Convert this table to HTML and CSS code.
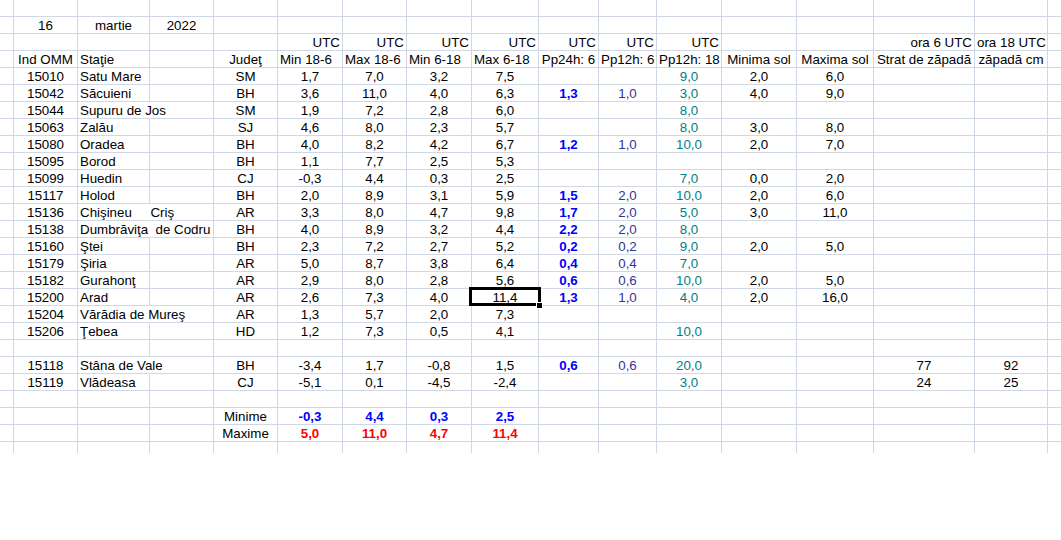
FILE: index.html
```html
<!DOCTYPE html>
<html lang="ro">
<head>
<meta charset="utf-8">
<title>Temperaturi 16 martie 2022</title>
<link rel="stylesheet" href="styles.css">
</head>
<body>
<div class="sheet">
  <div class="r"><div class="c"></div><div class="c"></div><div class="c"></div><div class="c"></div><div class="c"></div><div class="c"></div><div class="c"></div><div class="c"></div><div class="c"></div><div class="c"></div><div class="c"></div><div class="c"></div><div class="c"></div><div class="c"></div><div class="c"></div><div class="c"></div><div class="c"></div></div>
  <div class="r"><div class="c"></div><div class="c">16</div><div class="c">martie</div><div class="c">2022</div><div class="c"></div><div class="c"></div><div class="c"></div><div class="c"></div><div class="c"></div><div class="c"></div><div class="c"></div><div class="c"></div><div class="c"></div><div class="c"></div><div class="c"></div><div class="c"></div><div class="c"></div></div>
  <div class="r"><div class="c"></div><div class="c"></div><div class="c"></div><div class="c"></div><div class="c"></div><div class="c rt">UTC</div><div class="c rt">UTC</div><div class="c rt">UTC</div><div class="c rt">UTC</div><div class="c rt">UTC</div><div class="c rt">UTC</div><div class="c rt">UTC</div><div class="c"></div><div class="c"></div><div class="c rt">ora 6 UTC</div><div class="c rt">ora 18 UTC</div><div class="c"></div></div>
  <div class="r"><div class="c"></div><div class="c">Ind OMM</div><div class="c l">Staţie</div><div class="c"></div><div class="c">Judeţ</div><div class="c l">Min 18-6</div><div class="c l">Max 18-6</div><div class="c l">Min 6-18</div><div class="c l">Max 6-18</div><div class="c">Pp24h: 6</div><div class="c">Pp12h: 6</div><div class="c">Pp12h: 18</div><div class="c">Minima sol</div><div class="c">Maxima sol</div><div class="c">Strat de zăpadă</div><div class="c">zăpadă cm</div><div class="c"></div></div>

  <div class="r"><div class="c"></div><div class="c">15010</div><div class="c l">Satu Mare</div><div class="c"></div><div class="c">SM</div><div class="c">1,7</div><div class="c">7,0</div><div class="c">3,2</div><div class="c">7,5</div><div class="c b"></div><div class="c p"></div><div class="c t">9,0</div><div class="c">2,0</div><div class="c">6,0</div><div class="c"></div><div class="c"></div><div class="c"></div></div>
  <div class="r"><div class="c"></div><div class="c">15042</div><div class="c l">Săcuieni</div><div class="c"></div><div class="c">BH</div><div class="c">3,6</div><div class="c">11,0</div><div class="c">4,0</div><div class="c">6,3</div><div class="c b">1,3</div><div class="c p">1,0</div><div class="c t">3,0</div><div class="c">4,0</div><div class="c">9,0</div><div class="c"></div><div class="c"></div><div class="c"></div></div>
  <div class="r"><div class="c"></div><div class="c">15044</div><div class="c l ov">Supuru de Jos</div><div class="c"></div><div class="c">SM</div><div class="c">1,9</div><div class="c">7,2</div><div class="c">2,8</div><div class="c">6,0</div><div class="c b"></div><div class="c p"></div><div class="c t">8,0</div><div class="c"></div><div class="c"></div><div class="c"></div><div class="c"></div><div class="c"></div></div>
  <div class="r"><div class="c"></div><div class="c">15063</div><div class="c l">Zalău</div><div class="c"></div><div class="c">SJ</div><div class="c">4,6</div><div class="c">8,0</div><div class="c">2,3</div><div class="c">5,7</div><div class="c b"></div><div class="c p"></div><div class="c t">8,0</div><div class="c">3,0</div><div class="c">8,0</div><div class="c"></div><div class="c"></div><div class="c"></div></div>
  <div class="r"><div class="c"></div><div class="c">15080</div><div class="c l">Oradea</div><div class="c"></div><div class="c">BH</div><div class="c">4,0</div><div class="c">8,2</div><div class="c">4,2</div><div class="c">6,7</div><div class="c b">1,2</div><div class="c p">1,0</div><div class="c t">10,0</div><div class="c">2,0</div><div class="c">7,0</div><div class="c"></div><div class="c"></div><div class="c"></div></div>
  <div class="r"><div class="c"></div><div class="c">15095</div><div class="c l">Borod</div><div class="c"></div><div class="c">BH</div><div class="c">1,1</div><div class="c">7,7</div><div class="c">2,5</div><div class="c">5,3</div><div class="c b"></div><div class="c p"></div><div class="c t"></div><div class="c"></div><div class="c"></div><div class="c"></div><div class="c"></div><div class="c"></div></div>
  <div class="r"><div class="c"></div><div class="c">15099</div><div class="c l">Huedin</div><div class="c"></div><div class="c">CJ</div><div class="c">-0,3</div><div class="c">4,4</div><div class="c">0,3</div><div class="c">2,5</div><div class="c b"></div><div class="c p"></div><div class="c t">7,0</div><div class="c">0,0</div><div class="c">2,0</div><div class="c"></div><div class="c"></div><div class="c"></div></div>
  <div class="r"><div class="c"></div><div class="c">15117</div><div class="c l">Holod</div><div class="c"></div><div class="c">BH</div><div class="c">2,0</div><div class="c">8,9</div><div class="c">3,1</div><div class="c">5,9</div><div class="c b">1,5</div><div class="c p">2,0</div><div class="c t">10,0</div><div class="c">2,0</div><div class="c">6,0</div><div class="c"></div><div class="c"></div><div class="c"></div></div>
  <div class="r"><div class="c"></div><div class="c">15136</div><div class="c l ov">Chişineu     Criş</div><div class="c"></div><div class="c">AR</div><div class="c">3,3</div><div class="c">8,0</div><div class="c">4,7</div><div class="c">9,8</div><div class="c b">1,7</div><div class="c p">2,0</div><div class="c t">5,0</div><div class="c">3,0</div><div class="c">11,0</div><div class="c"></div><div class="c"></div><div class="c"></div></div>
  <div class="r"><div class="c"></div><div class="c">15138</div><div class="c l ov">Dumbrăviţa  de Codru</div><div class="c"></div><div class="c">BH</div><div class="c">4,0</div><div class="c">8,9</div><div class="c">3,2</div><div class="c">4,4</div><div class="c b">2,2</div><div class="c p">2,0</div><div class="c t">8,0</div><div class="c"></div><div class="c"></div><div class="c"></div><div class="c"></div><div class="c"></div></div>
  <div class="r"><div class="c"></div><div class="c">15160</div><div class="c l">Ştei</div><div class="c"></div><div class="c">BH</div><div class="c">2,3</div><div class="c">7,2</div><div class="c">2,7</div><div class="c">5,2</div><div class="c b">0,2</div><div class="c p">0,2</div><div class="c t">9,0</div><div class="c">2,0</div><div class="c">5,0</div><div class="c"></div><div class="c"></div><div class="c"></div></div>
  <div class="r"><div class="c"></div><div class="c">15179</div><div class="c l">Şiria</div><div class="c"></div><div class="c">AR</div><div class="c">5,0</div><div class="c">8,7</div><div class="c">3,8</div><div class="c">6,4</div><div class="c b">0,4</div><div class="c p">0,4</div><div class="c t">7,0</div><div class="c"></div><div class="c"></div><div class="c"></div><div class="c"></div><div class="c"></div></div>
  <div class="r"><div class="c"></div><div class="c">15182</div><div class="c l">Gurahonţ</div><div class="c"></div><div class="c">AR</div><div class="c">2,9</div><div class="c">8,0</div><div class="c">2,8</div><div class="c">5,6</div><div class="c b">0,6</div><div class="c p">0,6</div><div class="c t">10,0</div><div class="c">2,0</div><div class="c">5,0</div><div class="c"></div><div class="c"></div><div class="c"></div></div>
  <div class="r"><div class="c"></div><div class="c">15200</div><div class="c l">Arad</div><div class="c"></div><div class="c">AR</div><div class="c">2,6</div><div class="c">7,3</div><div class="c">4,0</div><div class="c sel">11,4</div><div class="c b">1,3</div><div class="c p">1,0</div><div class="c t">4,0</div><div class="c">2,0</div><div class="c">16,0</div><div class="c"></div><div class="c"></div><div class="c"></div></div>
  <div class="r"><div class="c"></div><div class="c">15204</div><div class="c l ov">Vărădia de Mureş</div><div class="c"></div><div class="c">AR</div><div class="c">1,3</div><div class="c">5,7</div><div class="c">2,0</div><div class="c">7,3</div><div class="c b"></div><div class="c p"></div><div class="c t"></div><div class="c"></div><div class="c"></div><div class="c"></div><div class="c"></div><div class="c"></div></div>
  <div class="r"><div class="c"></div><div class="c">15206</div><div class="c l">Ţebea</div><div class="c"></div><div class="c">HD</div><div class="c">1,2</div><div class="c">7,3</div><div class="c">0,5</div><div class="c">4,1</div><div class="c b"></div><div class="c p"></div><div class="c t">10,0</div><div class="c"></div><div class="c"></div><div class="c"></div><div class="c"></div><div class="c"></div></div>

  <div class="r"><div class="c"></div><div class="c"></div><div class="c"></div><div class="c"></div><div class="c"></div><div class="c"></div><div class="c"></div><div class="c"></div><div class="c"></div><div class="c"></div><div class="c"></div><div class="c"></div><div class="c"></div><div class="c"></div><div class="c"></div><div class="c"></div><div class="c"></div></div>
  <div class="r"><div class="c"></div><div class="c">15118</div><div class="c l ov">Stâna de Vale</div><div class="c"></div><div class="c">BH</div><div class="c">-3,4</div><div class="c">1,7</div><div class="c">-0,8</div><div class="c">1,5</div><div class="c b">0,6</div><div class="c p">0,6</div><div class="c t">20,0</div><div class="c"></div><div class="c"></div><div class="c">77</div><div class="c">92</div><div class="c"></div></div>
  <div class="r"><div class="c"></div><div class="c">15119</div><div class="c l">Vlădeasa</div><div class="c"></div><div class="c">CJ</div><div class="c">-5,1</div><div class="c">0,1</div><div class="c">-4,5</div><div class="c">-2,4</div><div class="c b"></div><div class="c p"></div><div class="c t">3,0</div><div class="c"></div><div class="c"></div><div class="c">24</div><div class="c">25</div><div class="c"></div></div>
  <div class="r"><div class="c"></div><div class="c"></div><div class="c"></div><div class="c"></div><div class="c"></div><div class="c"></div><div class="c"></div><div class="c"></div><div class="c"></div><div class="c"></div><div class="c"></div><div class="c"></div><div class="c"></div><div class="c"></div><div class="c"></div><div class="c"></div><div class="c"></div></div>
  <div class="r"><div class="c"></div><div class="c"></div><div class="c"></div><div class="c"></div><div class="c">Minime</div><div class="c mn">-0,3</div><div class="c mn">4,4</div><div class="c mn">0,3</div><div class="c mn">2,5</div><div class="c"></div><div class="c"></div><div class="c"></div><div class="c"></div><div class="c"></div><div class="c"></div><div class="c"></div><div class="c"></div></div>
  <div class="r"><div class="c"></div><div class="c"></div><div class="c"></div><div class="c"></div><div class="c">Maxime</div><div class="c mx">5,0</div><div class="c mx">11,0</div><div class="c mx">4,7</div><div class="c mx">11,4</div><div class="c"></div><div class="c"></div><div class="c"></div><div class="c"></div><div class="c"></div><div class="c"></div><div class="c"></div><div class="c"></div></div>
  <div class="r end"><div class="c"></div><div class="c"></div><div class="c"></div><div class="c"></div><div class="c"></div><div class="c"></div><div class="c"></div><div class="c"></div><div class="c"></div><div class="c"></div><div class="c"></div><div class="c"></div><div class="c"></div><div class="c"></div><div class="c"></div><div class="c"></div><div class="c"></div></div>
</div>
</body>
</html>
```

FILE: styles.css
```css
html, body {
  margin: 0;
  padding: 0;
  background: #ffffff;
}

body {
  font-family: "Liberation Sans", Arial, sans-serif;
  font-size: 13.33px;
  color: #000000;
  overflow: hidden;
}

.sheet {
  width: 1061px;
  display: flex;
  flex-direction: column;
}

.r {
  display: grid;
  grid-template-columns: 14px 64px 72px 64px 64px 65px 64px 65px 67px 60px 58px 65px 75px 77px 101px 73px 1fr;
  height: 17px;
}

.c {
  box-sizing: border-box;
  height: 17px;
  border-right: 1px solid #d0d7e5;
  border-bottom: 1px solid #d0d7e5;
  padding: 1px 2px 0 2px;
  line-height: 15px;
  text-align: center;
  white-space: pre;
  overflow: visible;
}

.c:last-child {
  border-right: none;
}

.r.end {
  height: 11px;
}

.r.end .c {
  height: 11px;
  border-bottom: none;
}

.l {
  text-align: left;
}

.rt {
  text-align: right;
}

.ov {
  border-right-color: transparent;
}

.b {
  color: #0000ff;
  font-weight: bold;
}

.p {
  color: #333399;
}

.t {
  color: #008080;
}

.mn {
  color: #0000ff;
  font-weight: bold;
}

.mx {
  color: #ff0000;
  font-weight: bold;
}

.sel {
  position: relative;
}

.sel::before {
  content: "";
  position: absolute;
  left: -3px;
  top: -2px;
  width: 72px;
  height: 19px;
  box-sizing: border-box;
  border: 3px solid #000000;
}

.sel::after {
  content: "";
  position: absolute;
  left: 64px;
  top: 13px;
  width: 7px;
  height: 7px;
  box-sizing: border-box;
  border: 1px solid #ffffff;
  background: #000000;
}
```
